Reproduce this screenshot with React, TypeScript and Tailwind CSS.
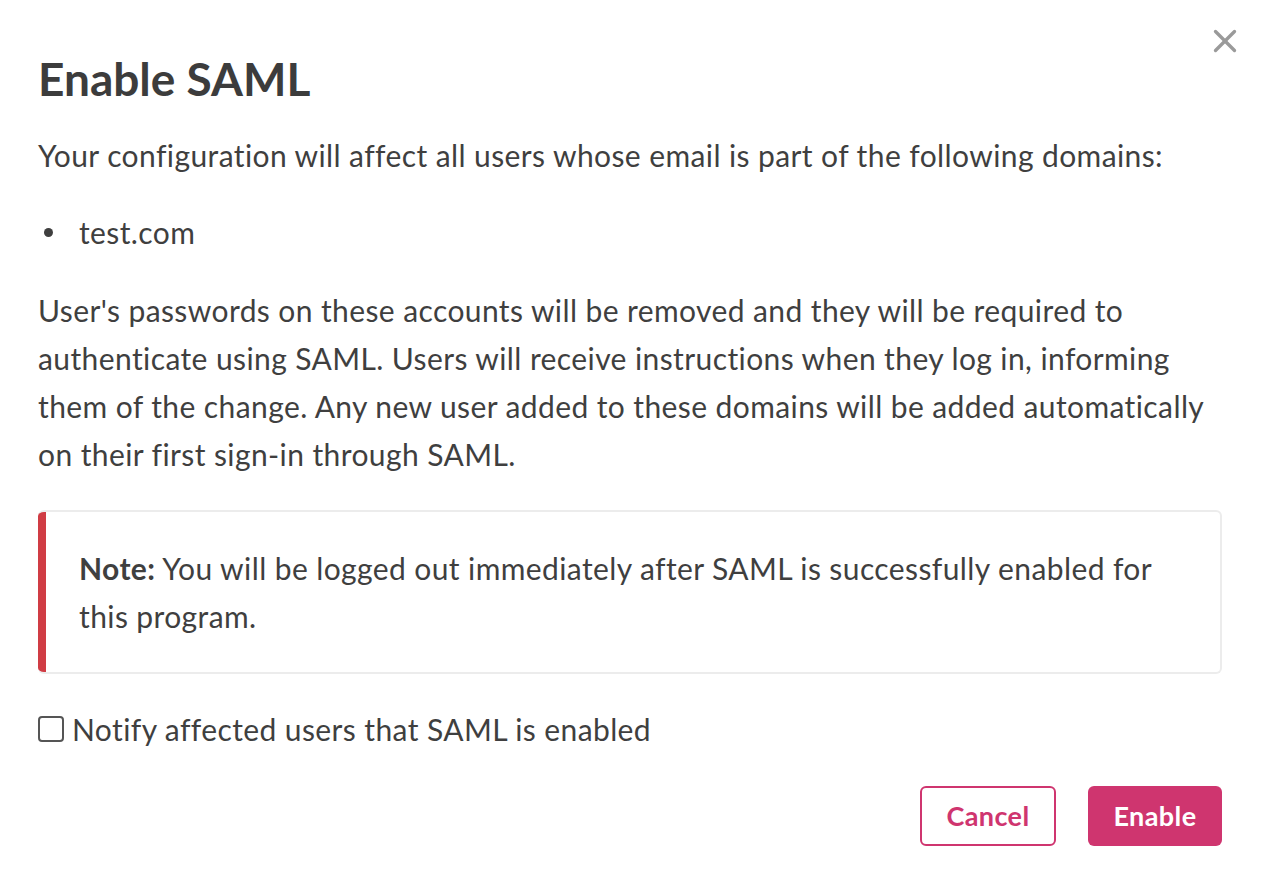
import { X } from 'lucide-react';

export default function App() {
  return (
    <div className="relative w-[1264px] h-[882px] bg-white text-[#3f3f3f] font-['Lato',_sans-serif]">
      <button className="absolute right-[20px] top-[22px] text-[#9a9a9a]" aria-label="Close">
        <X size={38} strokeWidth={2.1} />
      </button>

      <div className="px-[38px] pt-[51px] pr-[42px]">
        <h1 className="text-[46px] leading-[56px] font-bold text-[#3c3c3c]">Enable SAML</h1>

        <div className="text-[30px] leading-[48px] tracking-[0.4px]">
          <p className="mt-[24px]">
            Your configuration will affect all users whose email is part of the following domains:
          </p>

          <ul className="mt-[29px]">
            <li className="flex items-center">
              <span className="w-[9px] h-[9px] rounded-full bg-[#3f3f3f] ml-[6px] mr-[26px]" />
              <span>test.com</span>
            </li>
          </ul>

          <p className="mt-[30px]">
            User's passwords on these accounts will be removed and they will be required to
            <br />
            authenticate using SAML. Users will receive instructions when they log in, informing
            <br />
            them of the change. Any new user added to these domains will be added automatically
            <br />
            on their first sign-in through SAML.
          </p>

          <div className="mt-[32px] flex rounded-[6px] border-2 border-[#ececec] border-l-0 overflow-hidden">
            <div className="w-[8px] bg-[#d03c44] shrink-0" />
            <div className="py-[32px] pl-[33px] pr-[40px]">
              <span className="font-bold">Note:</span> You will be logged out immediately after SAML is successfully
              enabled for
              <br />
              this program.
            </div>
          </div>

          <label className="mt-[31px] flex items-center gap-[8px] h-[48px]">
            <span className="w-[26px] h-[26px] rounded-[4px] border-2 border-[#555] bg-white" />
            <span>Notify affected users that SAML is enabled</span>
          </label>
        </div>

        <div className="mt-[33px] flex justify-end gap-[32px]">
          <button className="w-[136px] h-[60px] rounded-[6px] border-2 border-[#cf356f] text-[#cf356f] text-[27px] tracking-[0.4px] font-bold bg-white">
            Cancel
          </button>
          <button className="w-[134px] h-[60px] rounded-[6px] bg-[#cf356f] text-white text-[27px] tracking-[0.4px] font-bold">
            Enable
          </button>
        </div>
      </div>
    </div>
  );
}
